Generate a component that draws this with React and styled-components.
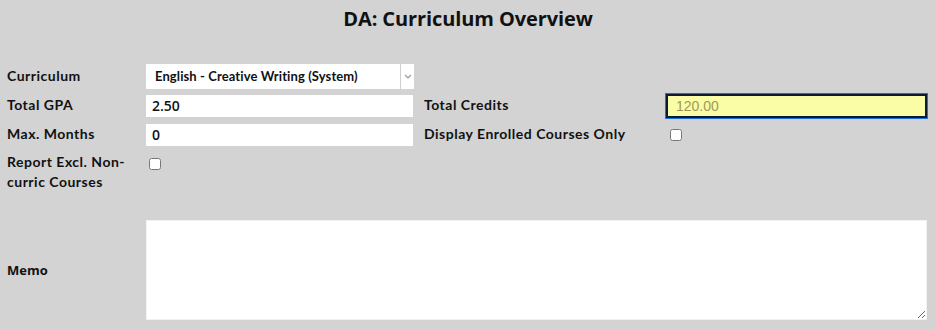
import React from "react";
import styled, { createGlobalStyle } from "styled-components";

const Global = createGlobalStyle`
  html, body { margin: 0; padding: 0; background: #d3d3d3; }
  body { font-family: "Lato", "Liberation Sans", sans-serif; color: #111; }
  * { box-sizing: border-box; }
`;

const Page = styled.div`
  width: 936px;
  height: 330px;
  background: #d3d3d3;
  overflow: hidden;
`;

const Title = styled.h1`
  margin: 0;
  height: 61px;
  padding-top: 7px;
  text-align: center;
  font-family: "Open Sans", "DejaVu Sans", sans-serif;
  font-weight: 700;
  font-size: 20px;
  line-height: 24px;
  color: #111;
  letter-spacing: -0.1px;
`;

const Form = styled.div`
  display: grid;
  grid-template-columns: 139px 268px 251px 263px;
  grid-template-rows: 30px 29px 29px auto;
  padding-left: 7px;
  align-items: center;
`;

const Label = styled.label`
  font-family: "Lato", "Liberation Sans", sans-serif;
  font-weight: 700;
  font-size: 14px;
  letter-spacing: 0.5px;
  line-height: 20px;
  color: #111;
  padding-left: ${(p) => (p.$right ? "10px" : "0")};
  align-self: ${(p) => (p.$top ? "start" : "center")};
  margin-top: ${(p) => (p.$top ? "3px" : "-1px")};
`;

const SelectWrap = styled.div`
  position: relative;
  width: 268px;
  height: 25px;
  background: #fff;
`;

const Select = styled.select`
  appearance: none;
  -webkit-appearance: none;
  width: 100%;
  height: 100%;
  border: none;
  background: transparent;
  padding: 0 0 0 9px;
  font-family: "Lato", "Liberation Sans", sans-serif;
  font-weight: 700;
  font-size: 13px;
  letter-spacing: 0.1px;
  color: #111;
  outline: none;
`;

const Chevron = styled.span`
  position: absolute;
  top: 0;
  right: 0;
  width: 14px;
  height: 100%;
  border-left: 1px solid #cfcfcf;
  display: flex;
  align-items: center;
  justify-content: center;
  pointer-events: none;
`;

const TextInput = styled.input`
  width: 267px;
  height: 22px;
  border: none;
  background: #fff;
  padding: 0 6px;
  font-family: "Open Sans", "DejaVu Sans", sans-serif;
  font-weight: 600;
  font-size: 14px;
  color: #111;
  outline: none;
`;

const CreditInput = styled.input`
  justify-self: start;
  margin-left: 1px;
  width: 261px;
  height: 24px;
  border: 2px solid #0d1a33;
  box-shadow: 0 0 0 1px #1d6fe0;
  background: #fbfca6;
  padding: 0 8px;
  font-family: "Liberation Sans", Arial, sans-serif;
  font-size: 14px;
  color: #9c9a55;
  outline: none;
`;

const Check = styled.input`
  margin: ${(p) => (p.$top ? "9px 0 0 3px" : "0 0 0 5px")};
  align-self: ${(p) => (p.$top ? "start" : "center")};
  justify-self: start;
  width: 12px;
  height: 12px;
`;

const MemoRow = styled.div`
  display: grid;
  grid-template-columns: 139px 781px;
  align-items: center;
  padding-left: 7px;
  margin-top: 28px;
`;

const MemoLabel = styled.label`
  font-family: "Open Sans", "DejaVu Sans", sans-serif;
  font-weight: 700;
  font-size: 13px;
  color: #111;
`;

const Memo = styled.textarea`
  width: 781px;
  height: 100px;
  border: 1px solid #f2f2f2;
  background: #fff;
  resize: both;
  outline: none;
  display: block;
`;

export default function App() {
  return (
    <Page>
      <Global />
      <Title>DA: Curriculum Overview</Title>
      <Form>
        <Label>Curriculum</Label>
        <SelectWrap>
          <Select defaultValue="ecw">
            <option value="ecw">English - Creative Writing (System)</option>
          </Select>
          <Chevron>
            <svg width="8" height="5" viewBox="0 0 8 5">
              <path d="M1 1 L4 4 L7 1" fill="none" stroke="#9a9a9a" strokeWidth="1.2" />
            </svg>
          </Chevron>
        </SelectWrap>
        <span />
        <span />

        <Label>Total GPA</Label>
        <TextInput defaultValue="2.50" />
        <Label $right>Total Credits</Label>
        <CreditInput defaultValue="120.00" />

        <Label>Max. Months</Label>
        <TextInput defaultValue="0" />
        <Label $right>Display Enrolled Courses Only</Label>
        <Check type="checkbox" />

        <Label $top>
          Report Excl. Non-
          <br />
          curric Courses
        </Label>
        <Check type="checkbox" $top />
        <span />
        <span />
      </Form>
      <MemoRow>
        <MemoLabel>Memo</MemoLabel>
        <Memo />
      </MemoRow>
    </Page>
  );
}
